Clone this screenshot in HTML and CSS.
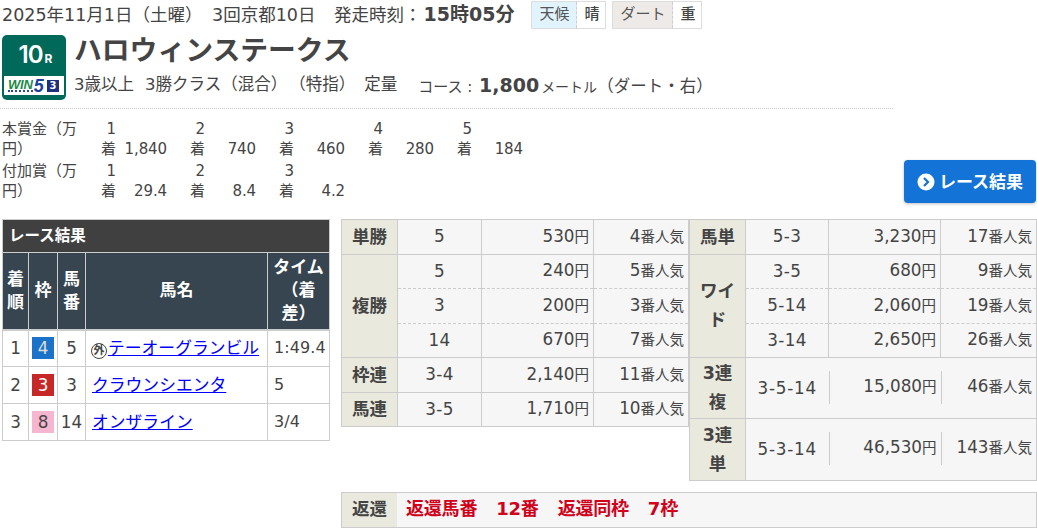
FILE: index.html
```html
<!DOCTYPE html>
<html lang="ja">
<head>
<meta charset="utf-8">
<title>ハロウィンステークス</title>
<link rel="stylesheet" href="styles.css">
</head>
<body>
<div class="info">
  <span class="date">2025年11月1日（土曜）</span>
  <span class="kai">3回京都10日</span>
  <span class="post">発走時刻：<b>15時05分</b></span>
  <span class="tag"><span class="tag-k sky">天候</span><span class="tag-v">晴</span></span>
  <span class="tag"><span class="tag-k sand">ダート</span><span class="tag-v">重</span></span>
</div>
<header class="race">
  <div class="badge">
    <div class="num">10<small>R</small></div>
    <div class="win"><span class="win-t"><span class="win-w">WIN</span><span class="win-5">5</span></span><span class="win-n">3</span></div>
  </div>
  <div class="race-main">
    <h1>ハロウィンステークス</h1>
    <p class="cond"><span>3歳以上</span><span>3勝クラス（混合）</span><span>（特指）</span><span class="teiryo">定量</span><span class="course">コース : <b>1,800</b><small>メートル</small><i>（ダート・右）</i></span></p>
  </div>
</header>
<section class="prize-wrap">
  <div class="prizes">
    <div class="prow"><div class="plabel">本賞金（万円）</div>
      <div class="pc"><span class="pk">1着</span><span class="pv">1,840</span></div>
      <div class="pc"><span class="pk">2着</span><span class="pv">740</span></div>
      <div class="pc"><span class="pk">3着</span><span class="pv">460</span></div>
      <div class="pc"><span class="pk">4着</span><span class="pv">280</span></div>
      <div class="pc"><span class="pk">5着</span><span class="pv">184</span></div>
    </div>
    <div class="prow"><div class="plabel">付加賞（万円）</div>
      <div class="pc"><span class="pk">1着</span><span class="pv">29.4</span></div>
      <div class="pc"><span class="pk">2着</span><span class="pv">8.4</span></div>
      <div class="pc"><span class="pk">3着</span><span class="pv">4.2</span></div>
    </div>
  </div>
  <a class="btn"><svg viewBox="0 0 18 18" width="18" height="18"><circle cx="9" cy="9" r="8.5" fill="#fff"/><path d="M7 5l4 4-4 4" fill="none" stroke="#1473d6" stroke-width="2.2"/></svg>レース結果</a>
</section>
<main class="results">
  <div class="res-col">
    <table class="res">
      <caption>レース結果</caption>
      <colgroup><col class="c1"><col class="c2"><col class="c3"><col class="c4"><col class="c5"></colgroup>
      <thead><tr><th>着順</th><th>枠</th><th>馬番</th><th>馬名</th><th>タイム<br>（着差）</th></tr></thead>
      <tbody>
        <tr><td class="ctr">1</td><td class="ctr"><span class="waku w4">4</span></td><td class="ctr">5</td><td><span class="mark">外</span><a href="#">テーオーグランビル</a></td><td>1:49.4</td></tr>
        <tr><td class="ctr">2</td><td class="ctr"><span class="waku w3">3</span></td><td class="ctr">3</td><td><a href="#">クラウンシエンタ</a></td><td>5</td></tr>
        <tr><td class="ctr">3</td><td class="ctr"><span class="waku w8">8</span></td><td class="ctr">14</td><td><a href="#">オンザライン</a></td><td>3/4</td></tr>
      </tbody>
    </table>
  </div>
  <div class="pay-col">
    <div class="pay-tables">
      <table class="pay">
        <colgroup><col class="p1"><col class="p2"><col class="p3"><col class="p4"></colgroup>
        <tr><th>単勝</th><td class="ctr">5</td><td class="yen">530<small>円</small></td><td class="pop">4<small>番人気</small></td></tr>
        <tr class="top"><th rowspan="3">複勝</th><td class="ctr">5</td><td class="yen">240<small>円</small></td><td class="pop">5<small>番人気</small></td></tr>
        <tr class="dash"><td class="ctr">3</td><td class="yen">200<small>円</small></td><td class="pop">3<small>番人気</small></td></tr>
        <tr class="dash"><td class="ctr">14</td><td class="yen">670<small>円</small></td><td class="pop">7<small>番人気</small></td></tr>
        <tr><th>枠連</th><td class="ctr">3-4</td><td class="yen">2,140<small>円</small></td><td class="pop">11<small>番人気</small></td></tr>
        <tr><th>馬連</th><td class="ctr">3-5</td><td class="yen">1,710<small>円</small></td><td class="pop">10<small>番人気</small></td></tr>
      </table>
      <table class="pay pay-r">
        <colgroup><col class="p1"><col class="p2"><col class="p3"><col class="p4"></colgroup>
        <tr><th>馬単</th><td class="ctr">5-3</td><td class="yen">3,230<small>円</small></td><td class="pop">17<small>番人気</small></td></tr>
        <tr class="top"><th rowspan="3">ワイド</th><td class="ctr">3-5</td><td class="yen">680<small>円</small></td><td class="pop">9<small>番人気</small></td></tr>
        <tr class="dash"><td class="ctr">5-14</td><td class="yen">2,060<small>円</small></td><td class="pop">19<small>番人気</small></td></tr>
        <tr class="dash"><td class="ctr">3-14</td><td class="yen">2,650<small>円</small></td><td class="pop">26<small>番人気</small></td></tr>
        <tr class="tall"><th>3連複</th><td class="ctr">3-5-14</td><td class="yen"><div>15,080<small>円</small></div></td><td class="pop"><div>46<small>番人気</small></div></td></tr>
        <tr class="tall"><th>3連単</th><td class="ctr">5-3-14</td><td class="yen"><div>46,530<small>円</small></div></td><td class="pop"><div>143<small>番人気</small></div></td></tr>
      </table>
    </div>
    <div class="refund"><div class="rf-k">返還</div><div class="rf-v"><span>返還馬番</span><span>12番</span><span>返還同枠</span><span>7枠</span></div></div>
  </div>
</main>
</body>
</html>
```

FILE: styles.css
```css
* { box-sizing: border-box; }
html, body { margin: 0; padding: 0; }
body {
  width: 1037px;
  height: 531px;
  overflow: hidden;
  background: #fff;
  color: #444;
  font-family: "DejaVu Sans", "Noto Sans CJK JP", sans-serif;
  font-size: 15px;
  line-height: 20px;
}
.info {
  height: 29px;
  padding: 0 0 0 2px;
  display: flex;
  align-items: center;
  font-size: 17.5px;
}
.date { width: 200px; white-space: nowrap; }
.kai { margin-left: 10px; width: 103px; white-space: nowrap; }
.post { margin-left: 19px; white-space: nowrap; }
.post b { font-size: 19px; margin-left: 2px; }
.tag {
  display: inline-flex;
  height: 28px;
  align-self: flex-end;
  margin-left: 6px;
  border: 1px solid #ddd;
  font-size: 15px;
  line-height: 25px;
}
.post + .tag { margin-left: 17px; }
.tag-k { padding: 0 7px; border-right: 1px dashed #ccc; color: #555; }
.tag-v { padding: 0 6px 0 7px; font-weight: 500; background: #fff; }
.sky { background: #e1f3fc; }
.sand { background: #eeeae7; }

.race {
  display: flex;
  width: 893px;
  padding: 6px 0 8px 2px;
  border-bottom: 1px dotted #ccc;
  height: 80px;
}
.badge {
  width: 64px;
  height: 65px;
  background: #00695a;
  border-radius: 5px;
  padding: 4px 2px 0;
  color: #fff;
  flex: none;
}
.num {
  text-align: center;
  font-family: "Inter", sans-serif;
  font-weight: 600;
  font-size: 24px;
  line-height: 32px;
  letter-spacing: -1px;
  padding-left: 3px;
}
.num small { font-size: 12px; font-weight: 700; margin-left: 2px; letter-spacing: 0; }
.win {
  background: #fff;
  height: 19px;
  margin-top: 1px;
  display: flex;
  align-items: center;
  justify-content: space-between;
  padding: 0 5px 0 4px;
}
.win-t {
  font-family: "Liberation Sans", sans-serif;
  font-weight: 700;
  font-style: italic;
  display: flex;
  align-items: center;
}
.win-w {
  font-size: 13px;
  line-height: 11px;
  color: #1d8a4a;
  border-bottom: 2px dotted #2a4a9a;
  letter-spacing: -0.2px;
}
.win-5 { font-size: 18px; line-height: 16px; color: #1f3f9a; margin-left: 1px; }
.win-n {
  background: #1f2f80;
  color: #fff;
  font-size: 10px;
  font-weight: 700;
  width: 12px;
  height: 12px;
  line-height: 12px;
  text-align: center;
}
.race-main { margin-left: 8px; }
h1 {
  margin: 0;
  padding-top: 1px;
  font-size: 27.8px;
  line-height: 30px;
  font-weight: 700;
  color: #444;
}
.cond {
  margin: 7px 0 0;
  display: flex;
  font-size: 16.5px;
  line-height: 24px;
  white-space: nowrap;
}
.cond span:first-child { margin-right: 11px; }
.cond span { margin-right: 2px; }
.cond .teiryo { margin-left: 7px; margin-right: 21px; }
.cond .course { margin: 0; font-size: 15px; }
.course b { font-size: 19px; margin-left: 2px; }
.course small { font-size: 14px; margin-left: 2px; }
.course i { font-style: normal; font-size: 16.5px; }

.prize-wrap {
  display: flex;
  justify-content: space-between;
  align-items: flex-end;
  height: 94px;
  padding: 10px 1px 0 2px;
}
.prow { display: flex; margin-bottom: 2px; }
.plabel { width: 98px; padding-right: 20px; }
.pc { width: 89px; display: flex; }
.pk { width: 16px; text-align: right; flex: none; word-break: break-all; }
.pv { width: 51px; text-align: right; align-self: flex-end; letter-spacing: -0.1px; }
.btn {
  width: 132px;
  height: 43px;
  background: #1473d6;
  border-radius: 4px;
  color: #fff;
  font-weight: 700;
  font-size: 17px;
  display: flex;
  align-items: center;
  justify-content: center;
  gap: 4px;
  box-shadow: 0 1px 3px rgba(0,0,0,.25);
}

.results {
  display: flex;
  padding: 16px 0 0 2px;
}
.res-col { width: 339px; flex: none; }
.res {
  width: 328px;
  table-layout: fixed;
  border-collapse: collapse;
  border: 1px solid #ccc;
}
.res caption {
  background: #404040;
  color: #fff;
  font-weight: 700;
  font-size: 15.5px;
  text-align: left;
  height: 33px;
  line-height: 32px;
  padding-left: 6px;
  border: 1px solid #ccc;
  border-bottom: 0;
}
.c1 { width: 26px; }
.c2 { width: 29px; }
.c3 { width: 28px; }
.c4 { width: 182px; }
.res th {
  background: #36454f;
  color: #fff;
  font-size: 17px;
  line-height: 23px;
  height: 77px;
  padding: 0 3px;
  border: 1px solid #ccc;
  border-bottom-width: 2px;
  font-weight: 700;
}
.res td {
  height: 37px;
  padding: 0 6px;
  border: 1px solid #ccc;
  font-size: 16.8px;
  white-space: nowrap;
}
.res td:last-child { padding: 0 6px; font-size: 16px; letter-spacing: .1px; }
.res td.ctr { padding: 0; }
.ctr { text-align: center; }
.res a { color: #00f; text-decoration: underline; vertical-align: 1px; }
.waku {
  display: inline-block;
  width: 22px;
  height: 22px;
  line-height: 22px;
  vertical-align: middle;
  color: #fff;
}
.w4 { background: #1a73c8; color: #ddd; }
.w3 { background: #c62828; }
.w8 { background: #f7b6cf; color: #444; }
.mark {
  display: inline-block;
  width: 16px;
  height: 16px;
  line-height: 13px;
  border: 1.5px solid #444;
  border-radius: 50%;
  font-size: 11px;
  font-weight: 700;
  text-align: center;
  vertical-align: 1px;
  margin-right: 1px;
  margin-left: -1px;
}

.pay-col { width: 696px; flex: none; }
.pay-tables { display: flex; height: 273px; }
.pay {
  width: 348px;
  align-self: flex-start;
  table-layout: fixed;
  border-collapse: collapse;
  background: #f6f6f6;
  font-size: 16.8px;
}
.p1 { width: 56px; }
.p2 { width: 84px; }
.p3 { width: 112px; }
.pay-r .p2 { width: 83px; }
.pay th {
  background: #e9e9dd;
  border: 1px solid #ccc;
  font-size: 17.5px;
  line-height: 29px;
  font-weight: 700;
  padding: 0 8px;
}
.pay td {
  border: 1px solid #ccc;
  padding: 0 0 2px;
}
.pay tr:nth-child(odd) > * { height: 35px; }
.pay tr:nth-child(even) > * { height: 34px; }
.pay tr.top th { height: auto; }
.pay tr.dash td { border-top: 1px dashed #ccc; }
.pay tr.top td { border-bottom: 1px dashed #ccc; }
.pay tr.top + .dash td { border-bottom: 1px dashed #ccc; }
.pay tr.top + .dash + .dash td { border-bottom: 1px solid #ccc; }
.yen, .pop { text-align: right; }
.pay .yen { padding-right: 4px; }
.pay .pop { padding-right: 4px; }
.pay .ctr { letter-spacing: .4px; }
.pay small { font-size: 14.5px; letter-spacing: 0; }
.pay tr.tall > * { height: 61px; }
.pay tr.tall:last-child > * { height: 62px; }
.pay .tall td { border-left: 0; border-right: 0; padding-right: 0; }
.pay .tall td:last-child { border-right: 1px solid #ccc; }
.tall td div { border-left: 1px solid #ccc; height: 33px; line-height: 31px; padding-right: 4px; }
.tall th { padding: 0 12px; }
.pay .tall .ctr { letter-spacing: .8px; padding-bottom: 1px; }
.refund {
  height: 36px;
  display: flex;
  border: 1px solid #ccc;
  background: #f6f6f6;
  font-weight: 700;
  line-height: 32px;
}
.rf-k { width: 55px; background: #e9e9dd; text-align: center; font-size: 17.5px; }
.rf-v { color: #d0021b; padding-left: 9px; display: flex; gap: 19px; font-size: 18px; letter-spacing: -.2px; }
```
